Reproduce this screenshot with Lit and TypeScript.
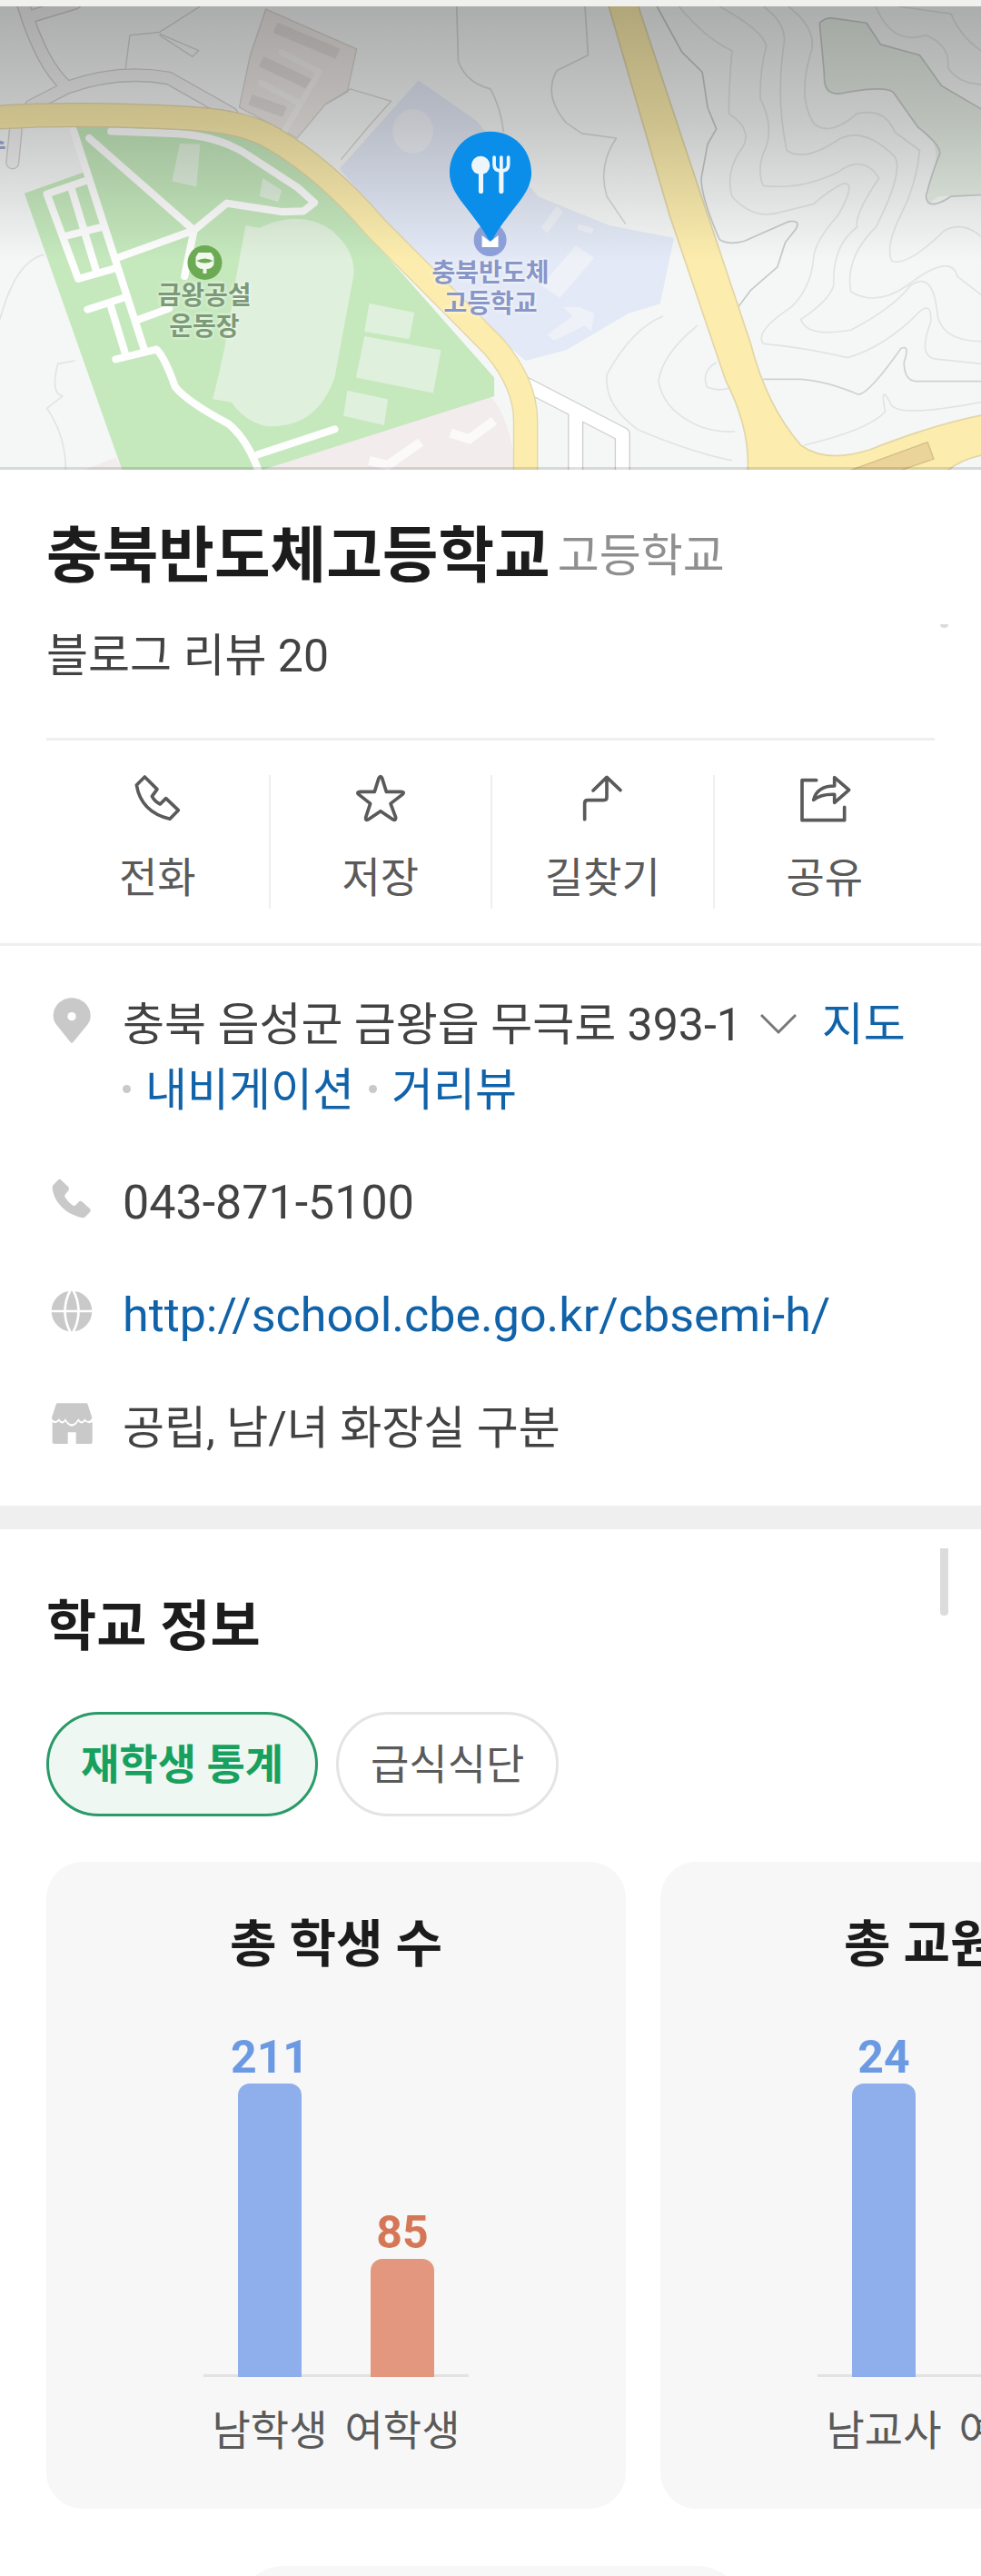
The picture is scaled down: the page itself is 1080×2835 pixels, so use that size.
import { css, CSSResultGroup, html, LitElement, svg, TemplateResult } from "lit";
import { customElement, property, state } from "lit/decorators.js";
import { classMap } from "lit/directives/class-map.js";
import { styleMap } from "lit/directives/style-map.js";

interface Bar {
    label: string;
    value: number;
    tone: "blue" | "red";
}

interface Stat {
    title: string;
    bars: Bar[];
}

const STATS: Stat[] = [
    {
        title: "총 학생 수",
        bars: [
            { label: "남학생", value: 211, tone: "blue" },
            { label: "여학생", value: 85, tone: "red" },
        ],
    },
    {
        title: "총 교원 수",
        bars: [
            { label: "남교사", value: 24, tone: "blue" },
            { label: "여교사", value: 20, tone: "red" },
        ],
    },
];

const TABS = ["재학생 통계", "급식식단"];

const BAR_MAX_HEIGHT = 323;

const ACTIONS = [
    {
        label: "전화",
        icon: svg`<path d="M40 12L13 39Q28 128 123 151L151 122L110 83L91 102Q72 93 64 76L81 53Z" />`,
    },
    {
        label: "저장",
        icon: svg`<path d="M75 16Q81 6 86 16L100 61L148 61Q162 62 153 70L114 100L131 146Q132 158 121 152L81 125L41 152Q30 158 32 146L47 100L9 70Q0 62 13 61L61 61Z" />`,
    },
    {
        label: "길찾기",
        icon: svg`<path d="M23 152V99Q23 89 33 89H86Q96 89 96 79V14M51 57L96 13L141 56" />`,
    },
    {
        label: "공유",
        icon: svg`<path d="M53 23H6V155H146V112M44 88C52 56 74 42 113 42V14L161 55L113 97V70Q70 68 44 88Z" />`,
    },
];

@customElement("place-map")
export class PlaceMap extends LitElement {
    protected render(): TemplateResult {
        return html`
            <svg class="tiles" viewBox="0 21 3136 1509" preserveAspectRatio="none" aria-hidden="true">
                <defs>
                    <linearGradient id="shade" x1="0" y1="0" x2="0" y2="1">
                        <stop offset="0" stop-color="#000" stop-opacity="0.3" />
                        <stop offset="0.25" stop-color="#000" stop-opacity="0.19" />
                        <stop offset="0.55" stop-color="#000" stop-opacity="0" />
                    </linearGradient>
                </defs>
                <rect y="21" width="3136" height="1509" fill="#f5f7f6" />
                <!-- forest -->
                <path fill="#e6eee5" d="M2620 75Q2640 55 2665 60L2770 75L2815 145L2940 180L3010 280L3136 355V635L3000 640L2965 665Q2960 640 2985 560Q3000 520 2985 465L2935 415L2855 300L2800 288L2710 300Q2640 320 2635 275Z" />
                <!-- contour lines -->
                <g fill="none" stroke="#e1e4e3" stroke-width="5" stroke-linejoin="round">
                    <path stroke="#c6cac9" d="M2100 21L2180 170L2245 235L2262 350L2290 420L2262 470L2242 580Q2240 640 2300 780Q2330 800 2380 785L2520 722Q2560 715 2545 745L2510 790L2485 870L2400 945L2360 1000" />
                    <path stroke="#c6cac9" d="M2620 75Q2640 55 2665 60L2770 75L2815 145L2940 180L3010 280L3136 355M3136 635L3040 640Q2965 690 2960 640Q2980 560 3005 500Q3005 470 2935 415L2855 300Q2830 280 2710 300Q2630 325 2635 240L2620 75" />
                    <path d="M2170 21Q2260 130 2340 165Q2330 280 2330 370Q2420 430 2360 500Q2320 570 2340 640Q2410 720 2500 690L2600 665Q2650 620 2695 598Q2740 590 2680 700Q2600 790 2600 850Q2590 940 2530 1000Q2410 1080 2440 1120Q2560 1130 2710 1165Q2830 1130 2940 1015Q2980 980 2975 1050Q2930 1170 3000 1170L3136 1185" />
                    <path d="M2300 21Q2440 100 2450 150Q2430 220 2430 320Q2480 420 2440 500Q2420 560 2440 605Q2560 620 2680 560Q2760 500 2810 580Q2730 700 2740 740Q2660 800 2665 930Q2650 980 2560 1040Q2580 1100 2720 1075Q2860 1000 2910 930Q2980 880 2995 1010Q3000 1110 3136 1112" />
                    <path d="M2440 21Q2520 80 2505 150Q2480 320 2515 490Q2570 530 2680 455Q2760 410 2860 510Q2890 560 2800 740Q2700 840 2720 950Q2800 1000 2900 930Q3040 820 3060 900L3136 960" />
                    <path d="M2520 21Q2620 100 2590 180Q2550 320 2600 400Q2650 450 2740 370Q2830 350 2860 430L2940 490Q2930 600 2880 700Q2830 800 2850 850Q2900 870 3020 750Q3080 720 3136 770" />
                    <path d="M2800 21Q2850 150 2960 115Q3040 150 3030 220Q3060 270 3136 275M2870 21L3040 45Q3070 120 3136 165" />
                    <path stroke="#ced2d1" d="M2440 1235H2560Q2640 1240 2745 1285Q2780 1280 2880 1135Q2910 1120 2890 1180Q2890 1240 2930 1242H3136" />
                    <path d="M2120 1030Q2020 1070 1940 1220Q1930 1320 2040 1400Q2200 1470 2340 1500M2230 1060Q2120 1150 2105 1240Q2120 1340 2240 1390Q2300 1410 2350 1405M2290 1180Q2240 1210 2260 1260Q2290 1275 2330 1265M2570 1450Q2780 1400 2830 1340Q2810 1240 2850 1320Q2880 1360 3136 1310" />
                    <path stroke="#d6d8d7" d="M1870 21L1880 180L1780 230Q1735 310 1810 400L1860 435L1970 450Q1910 540 1940 640L2000 730M1460 21L1465 200Q1490 270 1568 290Q1600 350 1610 430" />
                    <path d="M0 1040Q50 850 140 830M240 1175L185 1185Q160 1280 200 1290L150 1330Q210 1420 210 1530" />
                </g>
                <!-- market blocks -->
                <path fill="#ece8e6" stroke="#d8d3d0" stroke-width="4" d="M850 30L1140 160L1110 300L1040 340L950 450L765 350L800 180Z" />
                <path fill="none" stroke="#dedad8" stroke-width="36" d="M880 90L1080 175M835 200L990 275M800 325L910 365" />
                <path fill="none" stroke="#d3d3d2" stroke-width="4" d="M510 110L635 165L615 185L510 115M400 235L415 115L510 105L640 21M1040 340L1120 290L1250 330L1180 410L1090 520" />
                <!-- school grounds -->
                <path fill="#e3e9f6" d="M1338 262L1525 395L1720 640L1950 735L2155 775L2110 990L2010 1020L1810 1140L1680 1175L1430 960L1085 550Z" />
                <g fill="#eef1f7">
                    <ellipse cx="1320" cy="427" rx="65" ry="72" />
                    <path d="M1840 800L1900 840L1790 970L1730 930ZM1780 670L1730 740L1750 760L1800 690ZM1850 730L1900 745L1890 762L1845 745ZM1800 1000L1830 1030L1750 1090L1770 1110L1870 1060L1890 1080L1900 1020L1850 1000Z" />
                </g>
                <!-- side streets -->
                <g fill="none" stroke-linejoin="round" stroke-linecap="round">
                    <g stroke="#cfcfce" stroke-width="44">
                        <path d="M70 0Q130 210 215 285M100 345L215 285Q380 225 540 255L740 370M110 50L240 10M50 425L40 530" />
                        <path stroke-width="50" d="M1640 1230L1990 1415V1560M1840 1350V1560" />
                    </g>
                    <g stroke="#f1f1f1" stroke-width="36">
                        <path d="M70 0Q130 210 215 285M100 345L215 285Q380 225 540 255L740 370M110 50L240 10M50 425L40 530" />
                        <path stroke="#fff" stroke-width="42" d="M1640 1230L1990 1415V1560M1840 1350V1560" />
                    </g>
                    <path stroke="#f1f0ef" stroke-width="20" d="M900 170L1020 235L905 435M835 270L955 335" />
                </g>
                <path fill="#f2ecec" d="M840 1530L1568 1290Q1630 1360 1650 1530ZM270 1530L370 1490L390 1530Z" />
                <path fill="none" stroke="#fbf9f9" stroke-width="30" d="M1180 1500L1240 1515L1345 1440M1440 1410L1500 1430L1580 1370" />
                <!-- sports park -->
                <path fill="#c5e8bd" d="M235 400L720 400Q900 440 1120 700L1580 1230V1290L840 1530H390L78 630L270 560Z" />
                <path fill="#dff0dc" d="M785 735L830 742Q960 680 1060 750Q1140 820 1130 900L1070 1230Q1010 1400 850 1388Q780 1370 740 1310L680 1300Q730 1100 750 930ZM575 468L640 470L628 608L550 590ZM840 580L900 620L890 658L830 640ZM1180 988L1325 1018L1308 1105L1165 1080ZM1165 1095L1410 1140L1385 1280L1138 1230ZM1110 1272L1240 1300L1228 1385L1098 1355Z" />
                <g fill="none" stroke="#fdfefd" stroke-width="24" stroke-linejoin="round" stroke-linecap="round">
                    <path d="M235 425L460 1135M285 450L620 750L725 662L900 690L970 688L1005 660L950 610L800 510Q700 440 550 435L355 428M620 750L375 840M620 750L590 900" />
                    <path d="M285 585L150 632L250 908L365 875M230 620L310 890M205 770L325 740M280 1008L395 970M355 1000L400 1150M445 1040L540 1005" />
                    <path d="M370 1170L500 1138Q525 1160 560 1260Q600 1310 730 1380Q790 1430 825 1530M825 1480L1070 1398" />
                </g>
                <!-- main roads -->
                <g fill="none">
                    <path stroke="#e2d6a8" stroke-width="80" d="M-20 383Q260 365 600 385Q780 395 870 450Q1040 550 1200 740L1580 1130Q1680 1250 1680 1370V1560" />
                    <path stroke="#fcedae" stroke-width="72" d="M-20 383Q260 365 600 385Q780 395 870 450Q1040 550 1200 740L1580 1130Q1680 1250 1680 1370V1560" />
                    <path fill="#fcedae" stroke="#e2d6a8" stroke-width="5" d="M1943 10L2037 10L2190 480L2400 1120Q2450 1320 2560 1450Q2640 1510 2780 1465Q2990 1380 3150 1350V1480Q3060 1500 3020 1540H2390Q2400 1400 2320 1240L2140 700Z" />
                </g>
                <path fill="#ebd49a" stroke="#d5bf88" stroke-width="4" d="M2965 1440L2985 1495L2870 1535H2710Z" />
                <rect y="21" width="3136" height="1509" fill="url(#shade)" />
                <path stroke="#000" stroke-opacity="0.12" stroke-width="10" d="M0 1526H3136" />
            </svg>
            <div class="spot park">
                <svg class="badge" viewBox="0 0 40 40" aria-hidden="true">
                    <circle cx="20" cy="20" r="19" fill="#6cab54" />
                    <path fill="#f1f8ee" d="M10 14L13 9H27L30 14V22Q28 27 22 27V32H18V27Q12 27 10 22Z" />
                    <path fill="#6cab54" d="M11 18Q20 13 29 18Q20 23 11 18Z" />
                </svg>
                <span>금왕공설<br />운동장</span>
            </div>
            <div class="spot edge">수</div>
            <div class="spot school">
                <svg class="badge" viewBox="0 0 40 40" aria-hidden="true">
                    <circle cx="20" cy="20" r="18" fill="#8c9fd8" />
                    <path fill="#fff" d="M11 15L20 22L29 15V28H11Z" />
                </svg>
                <span>충북반도체<br />고등학교</span>
            </div>
            <svg class="pin" viewBox="0 0 270 360" aria-hidden="true">
                <path fill="#0a8eea" d="M135 2C58 2 2 62 2 136C2 190 44 232 68 265C96 302 112 322 128 352Q135 362 142 352C158 322 174 302 202 265C226 232 268 190 268 136C268 62 212 2 135 2Z" />
                <circle cx="103" cy="112" r="30" fill="#eef6fb" />
                <path fill="none" stroke="#eef6fb" stroke-width="15" stroke-linecap="round" d="M104 130V196M170 130V196" />
                <path fill="none" stroke="#eef6fb" stroke-width="11" stroke-linecap="round" d="M147 86V110Q147 130 170 130Q193 130 193 110V86M170 86V130" />
            </svg>
        `;
    }

    static get styles(): CSSResultGroup {
        return css`
            :host {
                display: block;
                position: relative;
                height: 510px;
                overflow: hidden;
            }
            .tiles {
                display: block;
                width: 100%;
                height: 100%;
            }
            .spot {
                position: absolute;
                display: flex;
                flex-direction: column;
                align-items: center;
                transform: translateX(-50%);
                font-size: 28px;
                font-weight: 700;
                line-height: 34px;
                text-align: center;
                white-space: nowrap;
            }
            .badge {
                width: 40px;
                height: 40px;
            }
            .park {
                left: 225px;
                top: 262px;
                color: #7b9a76;
                text-shadow: 0 0 4px #fff;
            }
            .school {
                left: 50%;
                top: 237px;
                color: #8896c8;
                text-shadow: 0 0 4px #fff;
            }
            .edge {
                left: -6px;
                top: 138px;
                color: #8b8fae;
            }
            .pin {
                position: absolute;
                left: 50%;
                top: 137px;
                width: 92px;
                height: 122px;
                transform: translateX(-50%);
            }
        `;
    }
}

@customElement("stat-card")
export class StatCard extends LitElement {
    @property({ attribute: false }) public stat!: Stat;

    protected render(): TemplateResult {
        const max = Math.max(...this.stat.bars.map((bar) => bar.value));
        return html`
            <h3 class="title">${this.stat.title}</h3>
            <div class="chart">
                ${this.stat.bars.map(
                    (bar) => html`
                        <div class="column ${bar.tone}">
                            <span class="value">${bar.value}</span>
                            <div
                                class="bar"
                                style=${styleMap({
                                    height: `${Math.round((BAR_MAX_HEIGHT * bar.value) / max)}px`,
                                })}
                            ></div>
                        </div>
                    `
                )}
            </div>
            <div class="labels">
                ${this.stat.bars.map((bar) => html`<span class="label">${bar.label}</span>`)}
            </div>
        `;
    }

    static get styles(): CSSResultGroup {
        return css`
            :host {
                display: flex;
                flex-direction: column;
                align-items: center;
                flex: 0 0 638px;
                box-sizing: border-box;
                padding: 56px 0;
                border-radius: 40px;
                background-color: #f7f7f7;
            }
            .title {
                margin: 0 0 64px;
                font-size: 56px;
                font-weight: 700;
                line-height: 70px;
                color: #1c1c1c;
            }
            .chart {
                display: flex;
                align-items: flex-end;
                height: 377px;
                background: linear-gradient(#e2e2e2, #e2e2e2) bottom / 100% 3px no-repeat;
            }
            .column {
                display: flex;
                flex-direction: column;
                align-items: center;
                gap: 4px;
                width: 146px;
            }
            .value {
                font-size: 50px;
                font-weight: 700;
                line-height: 50px;
            }
            .bar {
                width: 70px;
                border-radius: 13px 13px 0 0;
            }
            .blue .value {
                color: #6c9ae2;
            }
            .blue .bar {
                background-color: #8eafeb;
            }
            .red .value {
                color: #d57756;
            }
            .red .bar {
                background-color: #e4977f;
            }
            .labels {
                display: flex;
                margin-top: 29px;
            }
            .label {
                width: 146px;
                font-size: 46px;
                line-height: 60px;
                text-align: center;
                white-space: nowrap;
                color: #5a5a5a;
            }
        `;
    }
}

@customElement("app-root")
export class AppRoot extends LitElement {
    @state() private _tab = 0;

    protected render(): TemplateResult {
        return html`
            <place-map></place-map>
            <header class="head">
                <div class="name">
                    <h1>충북반도체고등학교</h1>
                    <span class="category">고등학교</span>
                </div>
                <div class="review">블로그 리뷰 20</div>
                <i class="thumb-tip"></i>
            </header>
            <nav class="actions">
                ${ACTIONS.map(
                    (action) => html`
                        <button class="action" type="button">
                            <svg class="action-icon" viewBox="0 6 162 162" aria-hidden="true">${action.icon}</svg>
                            ${action.label}
                        </button>
                    `
                )}
            </nav>
            ${this._renderInfo()}
            <section class="school">
                <i class="thumb"></i>
                <h2>학교 정보</h2>
                <div class="tabs">
                    ${TABS.map(
                        (tab, index) => html`
                            <button
                                type="button"
                                class=${classMap({ tab: true, active: index === this._tab })}
                                aria-pressed=${index === this._tab}
                                @click=${() => (this._tab = index)}
                            >
                                ${tab}
                            </button>
                        `
                    )}
                </div>
                <div class="cards">
                    ${STATS.map((stat) => html`<stat-card .stat=${stat}></stat-card>`)}
                </div>
                <div class="more"><div class="more-pill"></div></div>
            </section>
        `;
    }

    private _renderInfo(): TemplateResult {
        return html`
            <section class="info">
                <div class="row">
                    <svg class="info-icon" viewBox="0 0 150 150" aria-hidden="true">
                        <path d="M75 1C40 1 14 28 14 60C14 75 20 84 28 94L70 146Q75 152 80 146L123 94C131 84 137 75 137 60C137 28 110 1 75 1Z" />
                        <circle cx="75" cy="62" r="14" fill="#fff" />
                    </svg>
                    <div class="text">
                        충북 음성군 금왕읍 무극로 393-1<svg class="chevron" viewBox="0 0 40 24" aria-hidden="true"><path d="M1 2L20 21L39 2" /></svg><a href="#map">지도</a>
                        <span class="nowrap"><i class="dot first"></i><a href="#navi">내비게이션</a></span><i class="dot"></i><a href="#street">거리뷰</a>
                    </div>
                </div>
                <div class="row">
                    <svg class="info-icon" viewBox="0 0 150 150" aria-hidden="true">
                        <path d="M30 14Q35 9 40 14L64 37Q69 43 64 49L53 62Q50 67 54 73Q64 88 77 97Q83 101 88 97L98 86Q104 81 110 86L135 109Q140 115 135 120L120 135Q115 140 107 138C55 126 17 88 11 42Q10 35 14 30Z" />
                    </svg>
                    <div class="text latin">043-871-5100</div>
                </div>
                <div class="row">
                    <svg class="info-icon" viewBox="0 0 150 150" aria-hidden="true">
                        <circle cx="75" cy="75" r="67" />
                        <path fill="none" stroke="#fff" stroke-width="8" d="M4 75H146M71 4Q34 75 71 146M79 4Q116 75 79 146" />
                    </svg>
                    <div class="text latin"><a href="http://school.cbe.go.kr/cbsemi-h/">http://school.cbe.go.kr/cbsemi-h/</a></div>
                </div>
                <div class="row">
                    <svg class="info-icon" viewBox="0 0 150 150" aria-hidden="true">
                        <path d="M28 7H123Q127 7 128 11L142 54Q142 60 137 62Q129 69 122 63L118 58Q108 76 97 58Q86 76 75 76Q64 76 54 58Q43 76 33 58L28 63Q20 69 13 62Q8 59 9 54L23 11Q24 7 28 7Z" />
                        <path d="M11 70Q22 76 33 67Q43 80 54 67Q64 83 75 83Q86 83 97 67Q108 80 118 67Q130 76 143 70V135Q143 141 137 141H89V103H62V141H17Q11 141 11 135Z" />
                    </svg>
                    <div class="text">공립, 남/녀 화장실 구분</div>
                </div>
            </section>
        `;
    }

    static get styles(): CSSResultGroup {
        return css`
            :host {
                display: block;
                box-sizing: border-box;
                padding-top: 7px;
                overflow: hidden;
                background: linear-gradient(#f0f1ef, #f0f1ef) top / 100% 7px no-repeat #fff;
                font-family: Roboto, "Noto Sans CJK KR", sans-serif;
                color: #424242;
            }
            h1,
            h2 {
                margin: 0;
                font-weight: 700;
                color: #1c1c1c;
            }
            button {
                font-family: inherit;
                cursor: pointer;
            }
            a {
                color: #1062a9;
                text-decoration: none;
            }
            .head {
                position: relative;
                margin: 0 51px;
                padding: 55px 0 60px;
                border-bottom: 3px solid #efefef;
            }
            .name {
                display: flex;
                align-items: center;
                gap: 8px;
                line-height: 80px;
            }
            h1 {
                font-size: 67px;
            }
            .category {
                font-size: 50px;
                color: #8f8f8f;
            }
            .review {
                margin-top: 40px;
                font-size: 50px;
                line-height: 60px;
            }
            .thumb-tip,
            .thumb {
                position: absolute;
                width: 9px;
                background-color: #dcdcdc;
            }
            .thumb-tip {
                right: -15px;
                top: 170px;
                height: 4px;
                border-radius: 0 0 4px 4px;
            }
            .thumb {
                right: 36px;
                top: 21px;
                height: 74px;
                border-radius: 0 0 4px 4px;
            }
            .actions {
                display: grid;
                grid-template-columns: repeat(4, 1fr);
                padding: 38px 51px;
                border-bottom: 3px solid #efefef;
            }
            .action {
                display: flex;
                flex-direction: column;
                align-items: center;
                gap: 29px;
                height: 147px;
                padding: 0;
                border: 0;
                background: none;
                font-size: 46px;
                line-height: 60px;
                color: #5a5a5a;
            }
            .action + .action {
                border-left: 2px solid #efefef;
            }
            .action-icon {
                width: 54px;
                height: 54px;
                overflow: visible;
                fill: none;
                stroke: #5a5a5a;
                stroke-width: 11;
                stroke-linejoin: round;
                stroke-linecap: round;
            }
            .info {
                display: flex;
                flex-direction: column;
                gap: 52px;
                padding: 51px 51px 49px;
                border-bottom: 26px solid #efefef;
            }
            .row {
                display: flex;
                gap: 31px;
            }
            .info-icon {
                flex: none;
                width: 50px;
                height: 50px;
                margin: 6px 0 0 3px;
                fill: #c9c9c9;
            }
            .text {
                font-size: 50px;
                line-height: 72px;
            }
            .latin {
                font-size: 52px;
            }
            .nowrap {
                white-space: nowrap;
            }
            .chevron {
                width: 40px;
                height: 24px;
                margin: 0 28px 0 20px;
                vertical-align: 6px;
                fill: none;
                stroke: #777;
                stroke-width: 3;
            }
            .dot {
                display: inline-block;
                width: 9px;
                height: 9px;
                margin: 0 16px;
                border-radius: 50%;
                vertical-align: 14px;
                background-color: #c9c9c9;
            }
            .first {
                margin-left: 0;
            }
            .school {
                position: relative;
                padding: 73px 51px 0;
            }
            h2 {
                font-size: 60px;
                line-height: 70px;
            }
            .tabs {
                display: flex;
                gap: 20px;
                margin-top: 58px;
            }
            .tab {
                height: 115px;
                padding: 0 35px;
                border: 3px solid #e4e4e4;
                border-radius: 58px;
                background-color: #fff;
                font-size: 46px;
                line-height: 60px;
                color: #5a5a5a;
            }
            .active {
                border-color: #2a9a68;
                background-color: #eff7f3;
                font-weight: 700;
                color: #18a05e;
            }
            .cards {
                display: flex;
                gap: 38px;
                margin: 50px -51px 0 0;
                overflow: hidden;
            }
            .more {
                height: 11px;
                margin-top: 63px;
                overflow: hidden;
            }
            .more-pill {
                width: 564px;
                height: 110px;
                margin: 0 auto;
                border-radius: 55px;
                background-color: #f7f7f7;
            }
        `;
    }
}
